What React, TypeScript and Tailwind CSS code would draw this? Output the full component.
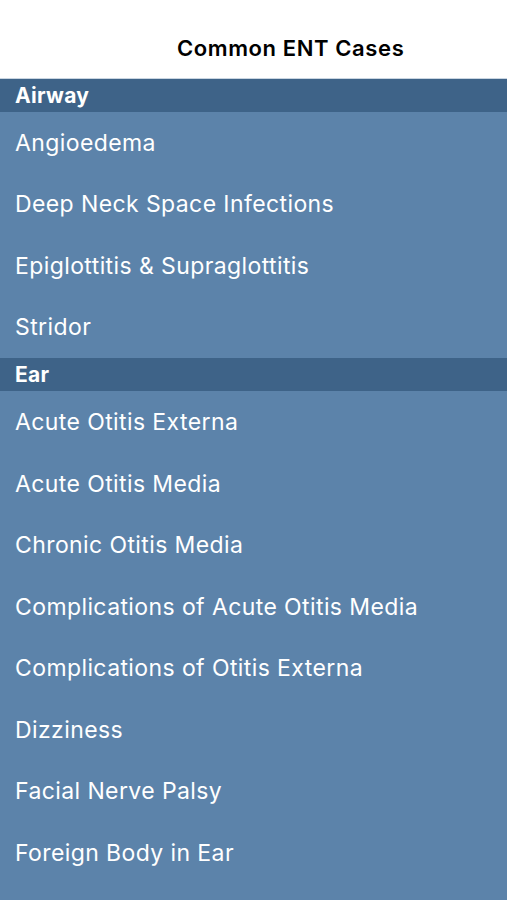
export default function App() {
  const sections = [
    {
      title: "Airway",
      items: ["Angioedema", "Deep Neck Space Infections", "Epiglottitis & Supraglottitis", "Stridor"],
    },
    {
      title: "Ear",
      items: [
        "Acute Otitis Externa",
        "Acute Otitis Media",
        "Chronic Otitis Media",
        "Complications of Acute Otitis Media",
        "Complications of Otitis Externa",
        "Dizziness",
        "Facial Nerve Palsy",
        "Foreign Body in Ear",
      ],
    },
  ];

  return (
    <div className="h-[900px] overflow-hidden bg-[#5c83aa]" style={{ fontFamily: 'Inter, "Liberation Sans", sans-serif' }}>
      {/* Nav bar */}
      <header className="h-[79px] bg-white flex items-end pb-[13px] pl-[177px] border-b border-[#c9d5e1]">
        <h1 className="text-[22px] font-semibold tracking-[0.6px] text-black">Common ENT Cases</h1>
      </header>

      {sections.map((s) => (
        <section key={s.title}>
          <div className="h-[33px] bg-[#3e6388] flex items-center px-[15px]">
            <span className="text-[21px] font-bold tracking-[0.3px] text-white">{s.title}</span>
          </div>
          {s.items.map((item) => (
            <div key={item} className="h-[61.6px] flex items-center px-[15px]">
              <span className="text-[23px] tracking-[0.4px] text-white">{item}</span>
            </div>
          ))}
        </section>
      ))}
    </div>
  );
}
